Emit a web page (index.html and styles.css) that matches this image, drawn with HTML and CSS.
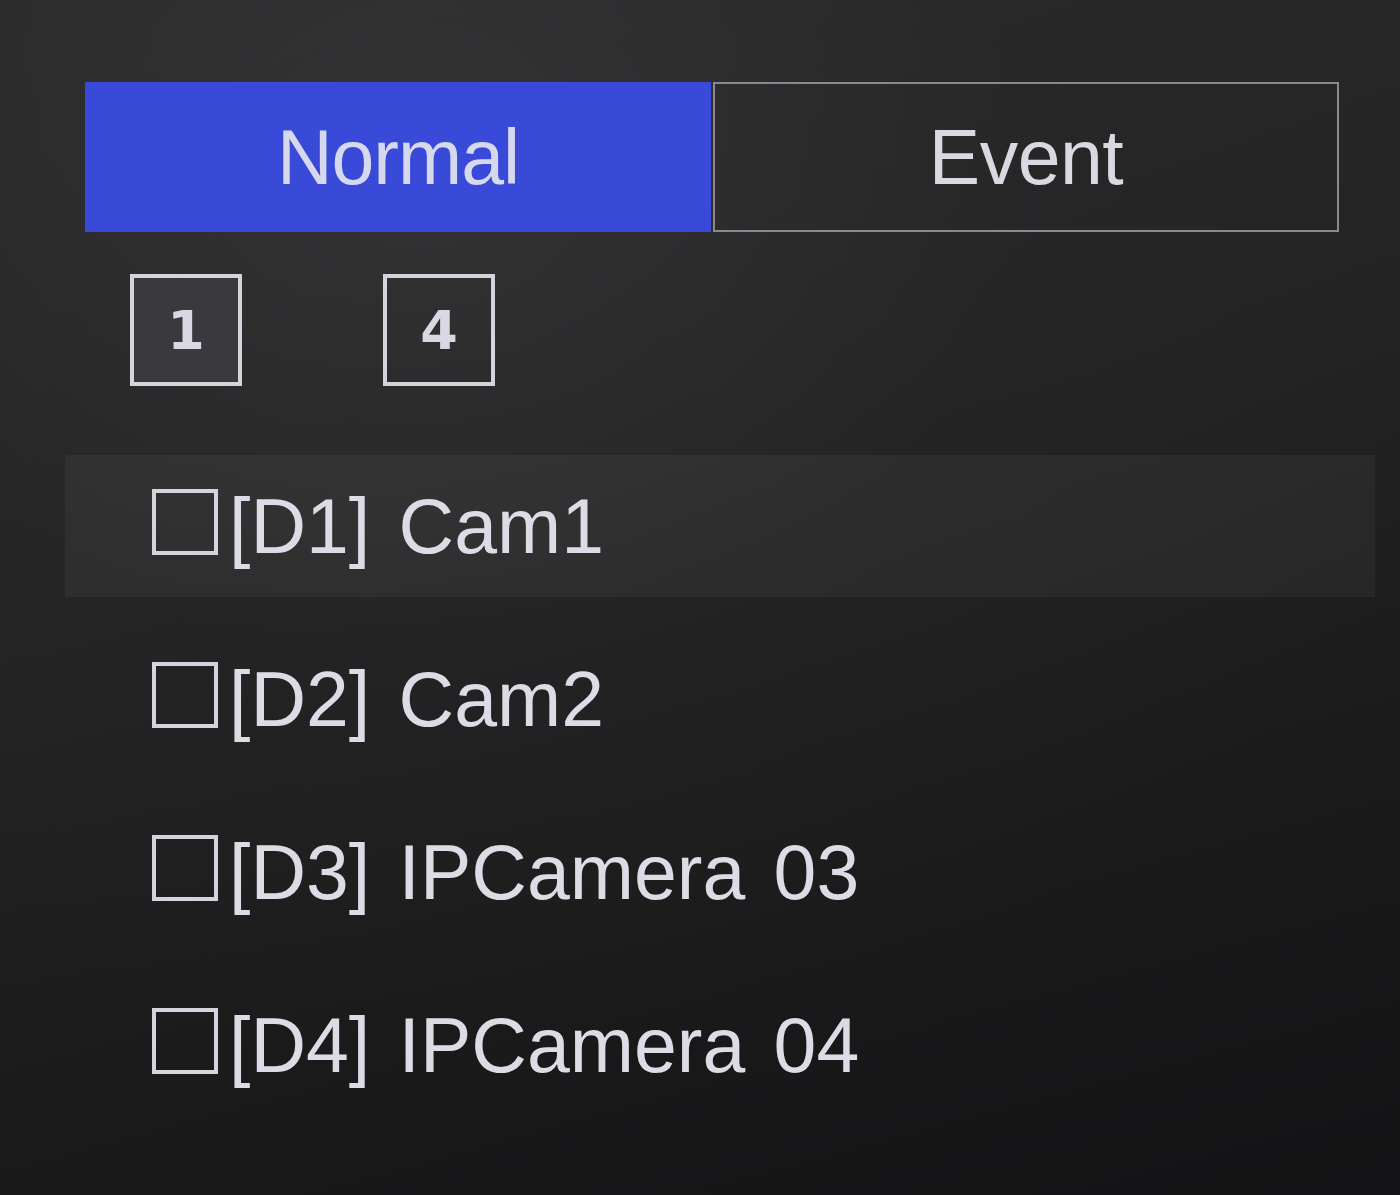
FILE: index.html
```html
<!DOCTYPE html>
<html lang="en">
<head>
<meta charset="utf-8">
<title>Playback channels</title>
<link rel="stylesheet" href="styles.css">
</head>
<body>
<div class="screen">
  <div class="panel">
    <div class="tabs">
      <div class="tab tab-active">Normal</div>
      <div class="tab">Event</div>
    </div>
    <div class="layouts">
      <div class="layout-btn layout-active">1</div>
      <div class="layout-btn">4</div>
    </div>
    <ul class="channels">
      <li class="channel channel-hover"><span class="check"></span><span class="label">[D1] Cam1</span></li>
      <li class="channel"><span class="check"></span><span class="label">[D2] Cam2</span></li>
      <li class="channel"><span class="check"></span><span class="label">[D3] IPCamera 03</span></li>
      <li class="channel"><span class="check"></span><span class="label">[D4] IPCamera 04</span></li>
    </ul>
  </div>
</div>
</body>
</html>
```

FILE: styles.css
```css
html, body {
  margin: 0;
  padding: 0;
}
body {
  width: 1400px;
  height: 1195px;
  overflow: hidden;
  font-family: "Liberation Sans", Arial, sans-serif;
  color: #dcdce6;
}
.screen {
  width: 1400px;
  height: 1195px;
  background:
    radial-gradient(ellipse 1100px 900px at 420px 160px, rgba(60,60,62,0.55) 0%, rgba(40,40,42,0.25) 55%, rgba(0,0,0,0) 100%),
    linear-gradient(165deg, #2b2b2c 0%, #242425 40%, #1b1b1c 70%, #131315 100%);
  box-sizing: border-box;
  padding: 82px 61px 0 85px;
}
.tabs {
  display: flex;
  gap: 2px;
  height: 150px;
}
.tab {
  flex: 1;
  display: flex;
  align-items: center;
  justify-content: center;
  font-size: 77px;
  letter-spacing: -0.5px;
  box-sizing: border-box;
  border: 2px solid #8a8a8e;
  color: #d9d9e2;
}
.tab-active {
  background: #3a4ad8;
  border-color: #3a4ad8;
  color: #d6d8ee;
  letter-spacing: -1px;
}
.layouts {
  display: flex;
  gap: 141px;
  margin: 42px 0 0 45px;
}
.layout-btn {
  width: 112px;
  height: 112px;
  box-sizing: border-box;
  border: 4px solid #d4d4de;
  display: flex;
  align-items: center;
  justify-content: center;
  font-family: "DejaVu Sans", sans-serif;
  font-weight: bold;
  font-size: 54px;
  color: #d8d8e2;
}
.layout-active {
  background: #3a393e;
}
.channels {
  list-style: none;
  margin: 69px -36px 0 -20px;
  padding: 0;
  display: flex;
  flex-direction: column;
  gap: 31px;
}
.channel {
  height: 142px;
  display: flex;
  align-items: center;
  padding-left: 87px;
}
.channel-hover {
  background: rgba(255,255,255,0.045);
}
.check {
  width: 66px;
  height: 66px;
  box-sizing: border-box;
  border: 4px solid #d4d4de;
  flex: none;
  margin-right: 11px;
  margin-top: -8px;
}
.label {
  font-size: 77px;
  letter-spacing: 0;
  word-spacing: 7px;
  line-height: 1;
  white-space: nowrap;
}
```
